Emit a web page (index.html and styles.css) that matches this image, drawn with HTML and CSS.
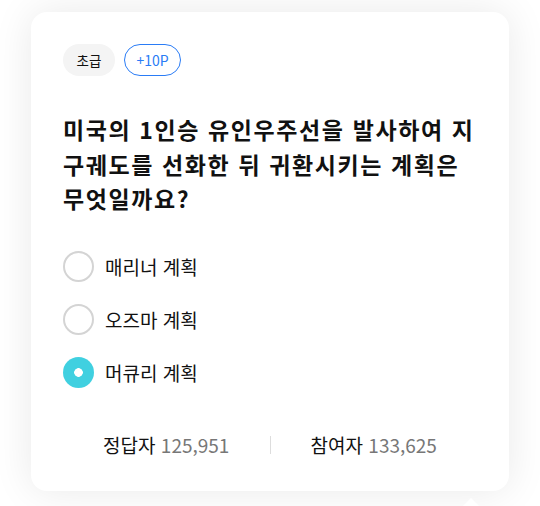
FILE: index.html
```html
<!DOCTYPE html>
<html lang="ko">
<head>
<meta charset="utf-8">
<link rel="stylesheet" href="styles.css">
</head>
<body>
<div class="card">
  <div class="tags">
    <span class="tag level">초급</span>
    <span class="tag point">+10P</span>
  </div>
  <h2 class="question">미국의 1인승 유인우주선을 발사하여 지구궤도를 선화한 뒤 귀환시키는 계획은 무엇일까요?</h2>
  <ul class="options">
    <li class="option"><span class="radio"></span><span class="label">매리너 계획</span></li>
    <li class="option"><span class="radio"></span><span class="label">오즈마 계획</span></li>
    <li class="option selected"><span class="radio"></span><span class="label">머큐리 계획</span></li>
  </ul>
  <div class="stats">
    <div class="stat"><span class="stat-label">정답자</span> <span class="stat-num">125,951</span></div>
    <div class="divider"></div>
    <div class="stat"><span class="stat-label">참여자</span> <span class="stat-num">133,625</span></div>
  </div>
</div>
<div class="pointer"></div>
</body>
</html>
```

FILE: styles.css
```css
html, body {
  margin: 0;
  padding: 0;
  background: #ffffff;
  font-family: "Noto Sans CJK KR", "Noto Sans", sans-serif;
  color: #111;
  overflow: hidden;
}
body {
  width: 540px;
  height: 506px;
  padding-top: 12px;
  box-sizing: border-box;
  position: relative;
}
.card {
  margin-left: 31px;
  width: 478px;
  height: 479px;
  box-sizing: border-box;
  padding: 32px 32px 0;
  background: #fff;
  border-radius: 16px;
  box-shadow: 0 0 40px rgba(0, 0, 0, 0.09);
  display: flex;
  flex-direction: column;
}
.tags {
  display: flex;
  gap: 9px;
  height: 32px;
}
.tag {
  display: flex;
  align-items: center;
  justify-content: center;
  height: 32px;
  box-sizing: border-box;
  border-radius: 16px;
  font-size: 13.5px;
  padding: 0;
}
.level {
  background: #f4f4f4;
  color: #111;
  width: 52px;
}
.point {
  border: 1px solid #2a7cf6;
  color: #2a7cf6;
  width: 57px;
  font-size: 14px;
}
.question {
  margin: 36px 0 0;
  font-size: 23px;
  font-weight: 700;
  line-height: 34.5px;
  letter-spacing: 1.6px;
  color: #111;
}
.options {
  list-style: none;
  margin: 35px 0 0;
  padding: 0;
  display: flex;
  flex-direction: column;
  gap: 22px;
}
.option {
  display: flex;
  align-items: center;
  height: 31px;
}
.radio {
  width: 31px;
  height: 31px;
  box-sizing: border-box;
  border: 2px solid #d4d4d4;
  border-radius: 50%;
  margin-right: 11px;
  flex: none;
}
.selected .radio {
  border: none;
  background: radial-gradient(circle, #fff 0 4px, #40d0e0 4.6px);
}
.label {
  font-size: 19px;
  color: #111;
}
.stats {
  margin-top: 45px;
  display: flex;
  align-items: center;
  height: 24px;
}
.stat {
  flex: 1;
  text-align: center;
  font-size: 19px;
  line-height: 24px;
  white-space: nowrap;
}
.stat-num {
  color: #777;
}
.divider {
  width: 1px;
  height: 18px;
  background: #ddd;
}
.pointer {
  position: absolute;
  left: 463px;
  top: 498px;
  width: 0;
  height: 0;
  border-left: 8px solid transparent;
  border-right: 8px solid transparent;
  border-bottom: 8px solid #fff;
}
```
